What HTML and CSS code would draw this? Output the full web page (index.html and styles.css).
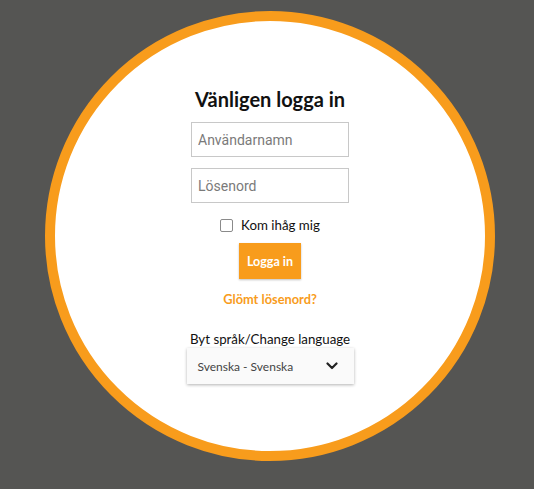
FILE: index.html
```html
<!DOCTYPE html>
<html lang="sv">
<head>
<meta charset="utf-8">
<title>Logga in</title>
<link rel="stylesheet" href="styles.css">
</head>
<body>
<div class="circle">
  <form class="login">
    <h1 class="title">Vänligen logga in</h1>
    <input class="field" type="text" placeholder="Användarnamn">
    <input class="field" type="password" placeholder="Lösenord">
    <label class="remember"><span class="box"></span>Kom ihåg mig</label>
    <button class="btn" type="button">Logga in</button>
    <a class="forgot" href="#">Glömt lösenord?</a>
    <div class="lang-label">Byt språk/Change language</div>
    <div class="select">
      <span>Svenska - Svenska</span>
      <svg class="chev" width="12" height="8" viewBox="0 0 12 8"><path d="M1.5 1.5 L6 6 L10.5 1.5" fill="none" stroke="#222" stroke-width="2.2" stroke-linecap="round" stroke-linejoin="round"/></svg>
    </div>
  </form>
</div>
</body>
</html>
```
FILE: styles.css
```css
html, body {
  margin: 0;
  padding: 0;
  height: 100%;
}
body {
  background: #555553;
  font-family: "Lato", "DejaVu Sans", sans-serif;
  overflow: hidden;
}
.circle {
  width: 430px;
  height: 430px;
  margin: 11px 0 0 45px;
  border: 10px solid #f89c1c;
  border-radius: 50%;
  background: #fff;
  display: flex;
  justify-content: center;
}
.login {
  display: flex;
  flex-direction: column;
  align-items: center;
  padding-top: 66px;
  width: 200px;
}
.title {
  margin: 0 0 11px;
  font-size: 20px;
  font-weight: 700;
  line-height: 24px;
  color: #111;
}
.field {
  box-sizing: border-box;
  width: 158px;
  height: 35px;
  margin: 0 0 11px;
  border: 1px solid #c8c8c8;
  padding: 0 6px;
  font-family: "Roboto", sans-serif;
  font-size: 14px;
  color: #333;
  outline: none;
}
.field::placeholder {
  color: #7a7a7a;
}
.remember {
  display: flex;
  align-items: center;
  gap: 8px;
  font-size: 13.3px;
  color: #111;
  margin-top: 2px;
  height: 18px;
}
.box {
  width: 11px;
  height: 11px;
  border: 1px solid #8a8a8a;
  border-radius: 2px;
  background: #fff;
}
.btn {
  margin-top: 9px;
  width: 62px;
  height: 36px;
  border: none;
  background: #f89c1c;
  color: #fff;
  font-family: "Lato", sans-serif;
  font-weight: 700;
  font-size: 12.5px;
  box-shadow: 0 1px 2px rgba(0,0,0,0.25);
  padding: 0;
}
.forgot {
  margin-top: 11px;
  color: #f89c1c;
  font-size: 12.8px;
  font-weight: 700;
  text-decoration: none;
  line-height: 19px;
}
.lang-label {
  margin-top: 21px;
  font-size: 13.3px;
  color: #111;
  line-height: 18px;
}
.select {
  box-sizing: border-box;
  width: 167px;
  height: 36px;
  margin-top: 0;
  background: #fafafa;
  box-shadow: 0 1px 3px rgba(0,0,0,0.3);
  display: flex;
  align-items: center;
  justify-content: space-between;
  padding: 0 16px 0 11px;
  font-size: 12px;
  color: #444;
}
.chev {
  display: block;
}
```
